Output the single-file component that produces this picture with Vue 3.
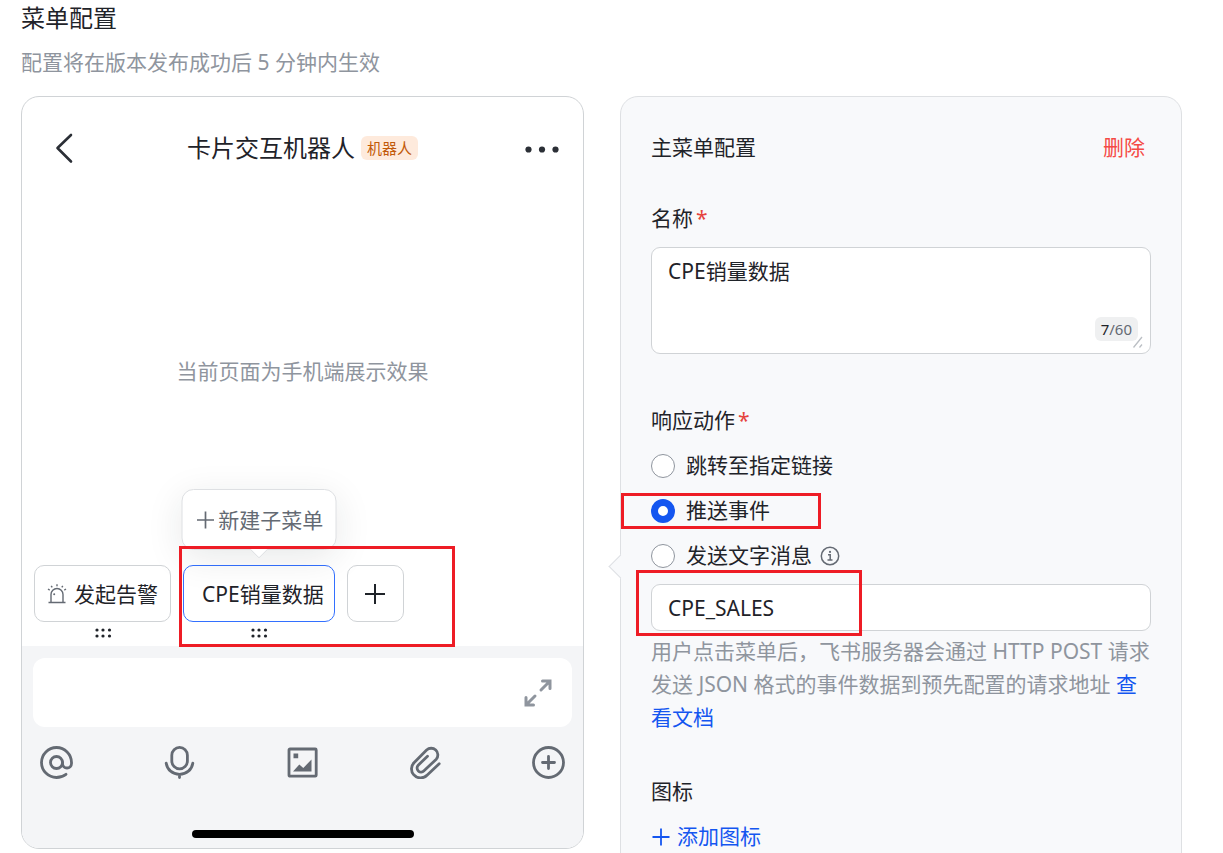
<script setup>
import { ref, computed } from 'vue'

const MAX_NAME = 60
const name = ref('CPE销量数据')
const eventKey = ref('CPE_SALES')
const action = ref('event')
const message = ref('')
const nameLength = computed(() => name.value.length)

const actions = [
  { value: 'link', label: '跳转至指定链接' },
  { value: 'event', label: '推送事件', marked: true },
  { value: 'text', label: '发送文字消息', info: true },
]
</script>

<template>
  <main class="page">
    <h1 class="page-title">菜单配置</h1>
    <p class="page-note">配置将在版本发布成功后 5 分钟内生效</p>

    <div class="columns">
      <section class="phone" aria-label="手机端预览">
        <header class="phone-header">
          <button class="plain back" type="button" aria-label="返回">
            <svg width="20" height="32" viewBox="0 0 20 32" fill="none" stroke="#2b2f36" stroke-width="2.6" stroke-linecap="round" stroke-linejoin="round"><path d="M17 3 3.5 16 17 29.5" /></svg>
          </button>
          <div class="phone-title">
            <h2>卡片交互机器人</h2>
            <span class="bot-tag">机器人</span>
          </div>
          <button class="plain more" type="button" aria-label="更多">
            <svg width="34" height="10" viewBox="0 0 34 10" fill="#2b2f36"><circle cx="3.5" cy="6.500" r="3.1" /><circle cx="17" cy="6.500" r="3.1" /><circle cx="30.500" cy="6.500" r="3.1" /></svg>
          </button>
        </header>

        <p class="preview">当前页面为手机端展示效果</p>

        <div class="menu-bar">
          <div class="menu-item">
            <button class="menu-button" type="button">
              <svg width="20" height="20" viewBox="0 0 20 20" fill="none" stroke="#646a73" stroke-width="1.4"><path d="M1.500 18.500h17M4 18.500v-8a6 6 0 0 1 12 0v8M10 .3v2M4.200 1.800l1 1.600M15.800 1.800l-1 1.600M1 5l1.700 1.100M19 5l-1.700 1.100" /><circle cx="7.200" cy="10.300" r="1" fill="#646a73" stroke="none" /></svg>
              <span>发起告警</span>
            </button>
            <svg class="grip" width="18" height="10" viewBox="0 0 18 10" fill="#1f2329"><circle cx="3" cy="2" r="1.6" /><circle cx="9" cy="2" r="1.6" /><circle cx="15.500" cy="2" r="1.6" /><circle cx="3" cy="8" r="1.6" /><circle cx="9" cy="8" r="1.6" /><circle cx="15.500" cy="8" r="1.6" /></svg>
          </div>
          <div class="menu-item">
            <button class="menu-button selected" type="button"><span>CPE销量数据</span></button>
            <svg class="grip" width="18" height="10" viewBox="0 0 18 10" fill="#1f2329"><circle cx="3" cy="2" r="1.6" /><circle cx="9" cy="2" r="1.6" /><circle cx="15.500" cy="2" r="1.6" /><circle cx="3" cy="8" r="1.6" /><circle cx="9" cy="8" r="1.6" /><circle cx="15.500" cy="8" r="1.6" /></svg>
            <button class="submenu" type="button">
              <svg width="18" height="18" viewBox="0 0 18 18" stroke="#646a73" stroke-width="1.700"><path d="M9 .5v17M.5 9h17" /></svg>
              <span>新建子菜单</span>
            </button>
            <span class="mark mark-menu" aria-hidden="true"></span>
          </div>
          <button class="menu-button add" type="button" aria-label="添加菜单">
            <svg width="20" height="20" viewBox="0 0 20 20" stroke="#1f2329" stroke-width="2"><path d="M10 0v20M0 10h20" /></svg>
          </button>
        </div>

        <footer class="composer">
          <div class="message-box">
            <input v-model="message" type="text" aria-label="消息" />
            <button class="plain" type="button" aria-label="展开">
              <svg width="28" height="28" viewBox="0 0 28 28" fill="none" stroke="#8f959e" stroke-width="3" stroke-linecap="round"><path d="M18.500 2H26v7.500M25.500 2.500 17 11M9.500 26H2v-7.500M2.500 25.500 11 17" /></svg>
            </button>
          </div>
          <div class="tools">
            <button class="plain" type="button" aria-label="提及">
              <svg width="33" height="33" viewBox="0 0 33 33" fill="none" stroke="#646a73" stroke-width="2.800" stroke-linecap="round"><circle cx="16.500" cy="16.500" r="6" /><path d="M26 28.300c-2.700 2-6 3.200-9.500 3.200a15 15 0 1 1 15-15v1a4.500 4.500 0 0 1-9 0v-1" /></svg>
            </button>
            <button class="plain" type="button" aria-label="语音">
              <svg width="33" height="33" viewBox="0 0 33 33" fill="none" stroke="#646a73" stroke-width="2.800" stroke-linecap="round"><rect x="8.800" y="1.400" width="15.600" height="21.400" rx="7.800" /><path d="M3.200 17.200c1 6.500 6.300 11.100 13.300 11.100s12.300-4.600 13.300-11.100M16.500 28.500v3" /></svg>
            </button>
            <button class="plain" type="button" aria-label="图片">
              <svg width="33" height="33" viewBox="0 0 33 33" fill="#646a73"><rect x="3" y="3" width="27.200" height="27.200" rx="1" fill="none" stroke="#646a73" stroke-width="2.800" /><path d="M7.500 7.500h4.700v4.700H7.500zM7 25.500l6.300-7 4 3.500 8.200-8.500v12z" /></svg>
            </button>
            <button class="plain" type="button" aria-label="附件">
              <svg width="33" height="33" viewBox="0 0 33 33" fill="none" stroke="#646a73" stroke-width="2.800" stroke-linecap="round" stroke-linejoin="round"><path d="M30.200 17.800 18.300 29a9.200 9.200 0 0 1-13.700-.3 9 9 0 0 1 .4-12L17.600 4a6.700 6.700 0 0 1 9.700 9.200L15 24.800a4 4 0 0 1-5.800-5.600l9.300-9" /></svg>
            </button>
            <button class="plain" type="button" aria-label="更多功能">
              <svg width="33" height="33" viewBox="0 0 33 33" fill="none" stroke="#646a73" stroke-width="2.800" stroke-linecap="round"><circle cx="16.500" cy="16.500" r="15" /><path d="M16.500 10.500v12M10.500 16.500h12" /></svg>
            </button>
          </div>
          <div class="home-bar"></div>
        </footer>
      </section>

      <form class="settings" @submit.prevent>
        <div class="settings-head">
          <h2>主菜单配置</h2>
          <button class="plain delete" type="button">删除</button>
        </div>

        <label class="label name-label" for="menu-name">名称<span class="star">*</span></label>
        <div class="name-box">
          <textarea id="menu-name" v-model="name" :maxlength="MAX_NAME"></textarea>
          <span class="counter"><b>{{ nameLength }}</b>/{{ MAX_NAME }}</span>
          <svg class="resize" width="10" height="12" viewBox="0 0 10 12" stroke="#bbbfc4" stroke-width="1.300"><path d="M.5 11.500 9 1M6.500 11.500 9 8.500" /></svg>
        </div>

        <fieldset>
          <legend class="label">响应动作<span class="star">*</span></legend>
          <div v-for="item in actions" :key="item.value" class="option">
            <label>
              <input v-model="action" type="radio" name="action" :value="item.value" />
              <span>{{ item.label }}</span>
            </label>
            <svg v-if="item.info" width="20" height="20" viewBox="0 0 20 20" fill="none" stroke="#646a73" stroke-width="1.500"><circle cx="10" cy="10" r="8.700" /><path d="M8 8.700h2.200v5M7.500 14h5" /><circle cx="10" cy="5.900" r="1.100" fill="#646a73" stroke="none" /></svg>
            <span v-if="item.marked" class="mark mark-option" aria-hidden="true"></span>
          </div>
        </fieldset>

        <div class="event-box">
          <input v-model="eventKey" type="text" aria-label="事件" />
          <span class="mark mark-event" aria-hidden="true"></span>
        </div>
        <p class="help">用户点击菜单后，飞书服务器会通过 HTTP POST 请求发送 JSON 格式的事件数据到预先配置的请求地址 <a href="#docs">查看文档</a></p>

        <h3 class="label">图标</h3>
        <button class="plain add-icon" type="button">
          <svg width="20" height="20" viewBox="0 0 20 20" stroke="#1456f0" stroke-width="1.800"><path d="M10 1.500v17M1.500 10h17" /></svg>
          <span>添加图标</span>
        </button>
      </form>
    </div>
  </main>
</template>

<style>
body {
  margin: 0;
  background: #fff;
}
</style>

<style scoped>
.page,
.page * {
  box-sizing: border-box;
}

.page {
  height: 100vh;
  overflow: hidden;
  padding: 0 41px 0 21px;
  color: #1f2329;
  font-family: "Noto Sans", "Noto Sans CJK SC", sans-serif;
  font-size: 21px;
  line-height: 33px;
}

h1,
h2,
h3,
p {
  margin: 0;
  font-weight: 400;
}

button,
input,
textarea {
  margin: 0;
  color: inherit;
  font: inherit;
}

button {
  cursor: pointer;
}

svg {
  display: block;
  flex: none;
}

.plain {
  padding: 0;
  border: 0;
  background: none;
}

.page-title {
  font-size: 24px;
  line-height: 36px;
}

.page-note {
  margin: 10px 0 17px;
  color: #8f959e;
}

.columns {
  display: grid;
  grid-template-columns: minmax(0, 563fr) minmax(0, 562fr);
  gap: 36px;
  align-items: start;
}

.phone {
  border: 1px solid #d0d3d6;
  border-radius: 18px;
}

.phone-header {
  display: grid;
  grid-template-columns: 1fr auto 1fr;
  align-items: center;
  height: 102px;
  padding: 0 24px;
}

.back {
  justify-self: start;
  margin-left: 8px;
}

.more {
  justify-self: end;
}

.phone-title {
  display: flex;
  align-items: center;
  gap: 6px;
}

.phone-title h2 {
  font-size: 24px;
  line-height: 36px;
}

.bot-tag {
  padding: 0 6px;
  border-radius: 6px;
  background: #feeadc;
  color: #c25a0a;
  font-size: 15px;
  line-height: 24px;
}

.preview {
  display: flex;
  align-items: center;
  justify-content: center;
  height: 344px;
  color: #8f959e;
}

.menu-bar {
  display: flex;
  align-items: flex-start;
  gap: 12px;
  padding: 22px 12px 8px;
}

.menu-item {
  position: relative;
}

.menu-button {
  display: flex;
  align-items: center;
  justify-content: center;
  gap: 7px;
  height: 57px;
  padding: 0 12px;
  border: 1px solid #d0d3d6;
  border-radius: 10px;
  background: #fff;
  white-space: nowrap;
}

.menu-button span,
.submenu span {
  padding-top: 2px;
}

.menu-button.selected {
  padding: 0 10px 0 18px;
  border-color: #3370ff;
}

.menu-button.add {
  width: 57px;
}

.grip {
  margin: 6px auto 0;
}

.submenu {
  position: absolute;
  left: 50%;
  bottom: 88px;
  transform: translateX(-50%);
  display: flex;
  align-items: center;
  gap: 4px;
  height: 61px;
  padding: 0 12px 0 14px;
  border: 1px solid #dee0e3;
  border-radius: 12px;
  background: #fff;
  box-shadow: 0 8px 36px rgba(31, 35, 41, 0.1);
  color: #646a73;
  white-space: nowrap;
}

.submenu::after {
  content: "";
  position: absolute;
  left: 50%;
  bottom: -7px;
  width: 12px;
  height: 12px;
  margin-left: -6px;
  border: solid #dee0e3;
  border-width: 0 1px 1px 0;
  border-radius: 0 0 2px 0;
  background: #fff;
  transform: rotate(45deg);
}

.mark {
  position: absolute;
  z-index: 2;
  border: 3px solid #ee1c25;
  pointer-events: none;
}

.mark-menu {
  top: -19px;
  left: -4px;
  width: 276px;
  height: 101px;
}

.composer {
  padding: 12px 11px 10px;
  border-radius: 0 0 17px 17px;
  background: #f4f5f7;
}

.message-box {
  display: flex;
  align-items: center;
  height: 69px;
  padding: 0 20px 0 16px;
  border-radius: 12px;
  background: #fff;
}

.message-box input {
  flex: 1;
  min-width: 0;
  border: 0;
  outline: 0;
  background: none;
}

.tools {
  display: flex;
  justify-content: space-between;
  margin: 19px 7px 51px;
}

.home-bar {
  width: 222px;
  height: 8px;
  margin: 0 auto;
  border-radius: 4px;
  background: #000;
}

.settings {
  position: relative;
  padding: 34px 30px 60px;
  border: 1px solid #dee0e3;
  border-radius: 18px;
  background: #f8f9fb;
}

.settings::before {
  content: "";
  position: absolute;
  top: 461px;
  left: -9px;
  width: 16px;
  height: 16px;
  border: solid #dee0e3;
  border-width: 0 0 1px 1px;
  background: #f8f9fb;
  transform: rotate(45deg);
}

.settings-head {
  display: flex;
  justify-content: space-between;
}

.settings-head h2 {
  font-size: 21px;
}

.delete {
  padding: 0 6px;
  color: #f54a45;
}

.label {
  display: block;
  padding: 0;
  font-size: 21px;
}

.name-label {
  margin: 38px 0 12px;
}

.star {
  margin-left: 3px;
  color: #e5433e;
}

.name-box {
  position: relative;
  margin-bottom: 50px;
}

textarea {
  display: block;
  width: 100%;
  height: 107px;
  padding: 7px 16px;
  border: 1px solid #d0d3d6;
  border-radius: 9px;
  outline: 0;
  background: #fff;
  resize: none;
}

.counter {
  position: absolute;
  right: 13px;
  bottom: 13px;
  padding: 0 6px;
  border-radius: 6px;
  background: #eff0f1;
  color: #646a73;
  font-size: 15px;
  line-height: 24px;
}

.counter b {
  color: #1f2329;
  font-weight: 400;
}

.resize {
  position: absolute;
  right: 8px;
  bottom: 6px;
}

fieldset {
  min-width: 0;
  margin: 0;
  padding: 0;
  border: 0;
}

.option {
  position: relative;
  display: flex;
  align-items: center;
  gap: 8px;
  margin-top: 12px;
}

.option label {
  display: flex;
  align-items: center;
  gap: 11px;
}

.option input {
  appearance: none;
  width: 24px;
  height: 24px;
  border: 1px solid #8f959e;
  border-radius: 50%;
  background: #fff;
}

.option input:checked {
  border: 7px solid #1456f0;
}

.mark-option {
  top: -1px;
  left: -30px;
  width: 200px;
  height: 36px;
}

.event-box {
  position: relative;
  margin: 12px 0 4px;
}

.event-box input {
  display: block;
  width: 100%;
  height: 47px;
  padding: 0 16px;
  border: 1px solid #d0d3d6;
  border-radius: 9px;
  outline: 0;
  background: #fff;
}

.mark-event {
  top: -14px;
  left: -15px;
  width: 226px;
  height: 66px;
}

.help {
  margin-bottom: 41px;
  color: #8f959e;
}

.help a {
  color: #1456f0;
  text-decoration: none;
}

.add-icon {
  display: flex;
  align-items: center;
  gap: 6px;
  margin-top: 12px;
  color: #1456f0;
}
</style>
